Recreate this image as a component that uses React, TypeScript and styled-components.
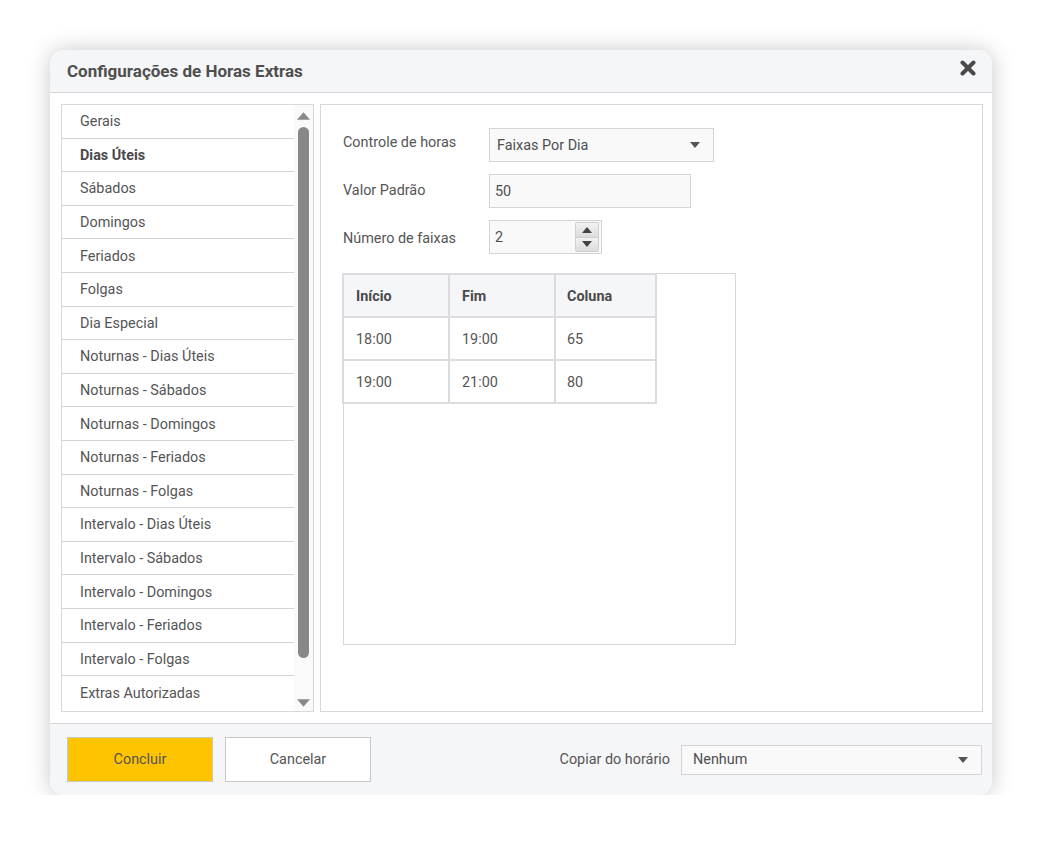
import React from 'react';
import styled, { createGlobalStyle } from 'styled-components';

const GlobalStyle = createGlobalStyle`
    body {
        margin: 0;
        background: #ffffff;
        font-family: Roboto, "Liberation Sans", sans-serif;
        color: #555;
    }
`

const sections = [
    'Gerais',
    'Dias Úteis',
    'Sábados',
    'Domingos',
    'Feriados',
    'Folgas',
    'Dia Especial',
    'Noturnas - Dias Úteis',
    'Noturnas - Sábados',
    'Noturnas - Domingos',
    'Noturnas - Feriados',
    'Noturnas - Folgas',
    'Intervalo - Dias Úteis',
    'Intervalo - Sábados',
    'Intervalo - Domingos',
    'Intervalo - Feriados',
    'Intervalo - Folgas',
    'Extras Autorizadas',
]

const faixas = [
    { inicio: '18:00', fim: '19:00', coluna: '65' },
    { inicio: '19:00', fim: '21:00', coluna: '80' },
]

const Caret = () => (
    <svg width="10" height="6" viewBox="0 0 10 6">
        <path d="M0 0h10L5 6z" fill="#555"/>
    </svg>
)

export default function App() {
    return (
        <>
            <GlobalStyle/>
            <Page>
                <Dialog>
                    <Header>
                        <Title>Configurações de Horas Extras</Title>
                        <Close aria-label="Fechar">
                            <svg width="16" height="16" viewBox="0 0 16 16">
                                <path d="M2.5 2.5l11 11M13.5 2.5l-11 11" stroke="#4a4a4a" strokeWidth="4" strokeLinecap="round"/>
                            </svg>
                        </Close>
                    </Header>
                    <Body>
                        <ListPanel>
                            <List>
                                {sections.map((s) => (
                                    <Item key={s} $active={s === 'Dias Úteis'}>{s}</Item>
                                ))}
                            </List>
                            <ScrollBar>
                                <ScrollArrow viewBox="0 0 14 8">
                                    <path d="M7 0l7 8H0z" fill="#888"/>
                                </ScrollArrow>
                                <Track>
                                    <Thumb/>
                                </Track>
                                <ScrollArrow viewBox="0 0 14 8">
                                    <path d="M0 0h14L7 8z" fill="#888"/>
                                </ScrollArrow>
                            </ScrollBar>
                        </ListPanel>
                        <ContentPanel>
                            <Form>
                                <Label $shift={-3}>Controle de horas</Label>
                                <Select $width={225}>
                                    <span>Faixas Por Dia</span>
                                    <Caret/>
                                </Select>
                                <Label $shift={-1}>Valor Padrão</Label>
                                <Input $width={202}>50</Input>
                                <Label $shift={1}>Número de faixas</Label>
                                <Input $width={113}>
                                    2
                                    <Spinner>
                                        <SpinButton>
                                            <svg width="10" height="6" viewBox="0 0 10 6"><path d="M5 0l5 6H0z" fill="#444"/></svg>
                                        </SpinButton>
                                        <SpinButton>
                                            <svg width="10" height="6" viewBox="0 0 10 6"><path d="M0 0h10L5 6z" fill="#444"/></svg>
                                        </SpinButton>
                                    </Spinner>
                                </Input>
                            </Form>
                            <TableBox>
                                <Table>
                                    <thead>
                                        <tr>
                                            <Th>Início</Th>
                                            <Th>Fim</Th>
                                            <Th>Coluna</Th>
                                        </tr>
                                    </thead>
                                    <tbody>
                                        {faixas.map((f) => (
                                            <tr key={f.inicio}>
                                                <Td>{f.inicio}</Td>
                                                <Td>{f.fim}</Td>
                                                <Td>{f.coluna}</Td>
                                            </tr>
                                        ))}
                                    </tbody>
                                </Table>
                            </TableBox>
                        </ContentPanel>
                    </Body>
                    <Footer>
                        <Button $primary>Concluir</Button>
                        <Button>Cancelar</Button>
                        <CopyLabel>Copiar do horário</CopyLabel>
                        <Select $width={301} $height={30} $padLeft={11}>
                            <span>Nenhum</span>
                            <Caret/>
                        </Select>
                    </Footer>
                </Dialog>
            </Page>
        </>
    )
}

const Page = styled.div`
    padding: 50px 0 0 50px;
`

const Dialog = styled.div`
    width: 942px;
    height: 745px;
    border-radius: 14px;
    background: #fff;
    box-shadow: 0 0 22px rgba(0, 0, 0, 0.22);
    display: flex;
    flex-direction: column;
    overflow: hidden;
`

const Header = styled.div`
    height: 42px;
    background: #f5f6f8;
    border-bottom: 1px solid #d3d3d8;
    display: flex;
    align-items: center;
    justify-content: space-between;
    padding: 0 16px 0 17px;
    flex-shrink: 0;
`

const Title = styled.h1`
    margin: 0;
    font-size: 17px;
    font-weight: 700;
    color: #4f4f4f;
`

const Close = styled.div`
    display: flex;
    margin-top: -7px;
`

const Body = styled.div`
    flex: 1;
    display: flex;
    gap: 6px;
    padding: 11px 9px 11px 11px;
    border-bottom: 1px solid #d8d8dc;
`

const ListPanel = styled.div`
    width: 251px;
    border: 1px solid #d8d8dc;
    display: flex;
`

const List = styled.div`
    flex: 1;
    display: flex;
    flex-direction: column;
`

const Item = styled.div<{ $active?: boolean }>`
    height: 33.6px;
    box-sizing: border-box;
    border-bottom: 1px solid #d3d3d8;
    padding: 1px 0 0 18px;
    display: flex;
    align-items: center;
    font-size: 14.4px;
    font-weight: ${(p) => (p.$active ? 700 : 400)};
    color: ${(p) => (p.$active ? '#4a4a4a' : '#555')};

    &:last-child {
        border-bottom: none;
    }
`

const ScrollBar = styled.div`
    width: 19px;
    background: #fafafa;
    display: flex;
    flex-direction: column;
    align-items: center;
    padding: 7px 0 4px;
    gap: 3px;
`

const ScrollArrow = styled.svg`
    width: 13px;
    height: 8px;
    flex-shrink: 0;
`

const Track = styled.div`
    flex: 1;
    width: 11px;
    padding: 4px 0 38px;
    display: flex;
`

const Thumb = styled.div`
    flex: 1;
    background: #888;
    border-radius: 6px;
`

const ContentPanel = styled.div`
    flex: 1;
    border: 1px solid #d8d8dc;
    padding: 23px 22px;
    display: flex;
    flex-direction: column;
    gap: 19px;
`

const Form = styled.div`
    display: grid;
    grid-template-columns: 146px auto;
    row-gap: 12px;
    align-items: center;
    justify-items: start;
`

const Label = styled.div<{ $shift: number }>`
    font-size: 14.4px;
    color: #555;
    position: relative;
    top: ${(p) => p.$shift}px;
`

const Select = styled.div<{ $width: number; $height?: number; $padLeft?: number }>`
    width: ${(p) => p.$width}px;
    height: ${(p) => p.$height ?? 34}px;
    box-sizing: border-box;
    border: 1px solid #d3d3d8;
    background: #f9f9f9;
    display: flex;
    align-items: center;
    justify-content: space-between;
    padding: 0 13px 0 ${(p) => p.$padLeft ?? 7}px;
    font-size: 14.4px;
    color: #4f4f4f;
`

const Input = styled.div<{ $width: number }>`
    width: ${(p) => p.$width}px;
    height: 34px;
    box-sizing: border-box;
    border: 1px solid #d3d3d8;
    background: #f9f9f9;
    display: flex;
    align-items: center;
    justify-content: space-between;
    padding: 0 2px 0 5px;
    font-size: 14.4px;
    color: #4f4f4f;
`

const Spinner = styled.div`
    width: 24px;
    height: 30px;
    display: flex;
    flex-direction: column;
    border-radius: 2px;
    overflow: hidden;
    border: 1px solid #cfcfcf;
    box-sizing: border-box;
`

const SpinButton = styled.div`
    flex: 1;
    display: flex;
    align-items: center;
    justify-content: center;
    background: linear-gradient(#f2f2f2, #dcdcdc);

    & + & {
        border-top: 1px solid #cfcfcf;
    }
`

const TableBox = styled.div`
    width: 393px;
    height: 372px;
    box-sizing: border-box;
    border: 1px solid #d8d8dc;
`

const Table = styled.table`
    border-collapse: collapse;
    font-size: 14.4px;
    margin: -1px 0 0 -2px;
`

const Th = styled.th`
    width: 106px;
    height: 43px;
    box-sizing: border-box;
    background: #f5f6f8;
    border: 2px solid #dcdce0;
    text-align: left;
    padding: 1px 0 0 12px;
    font-weight: 700;
    color: #4a4a4a;

    &:last-child {
        width: 101px;
        padding-left: 11px;
    }
`

const Td = styled.td`
    height: 43px;
    box-sizing: border-box;
    border: 2px solid #dcdce0;
    padding: 1px 0 0 12px;
    color: #555;

    &:last-child {
        padding-left: 11px;
    }
`

const Footer = styled.div`
    height: 71px;
    background: #f5f6f8;
    display: flex;
    align-items: center;
    padding: 0 10px 0 17px;
    flex-shrink: 0;
`

const Button = styled.div<{ $primary?: boolean }>`
    width: 146px;
    height: 45px;
    box-sizing: border-box;
    border: 1px solid #c8c8c8;
    background: ${(p) => (p.$primary ? '#ffc400' : '#fff')};
    display: flex;
    align-items: center;
    justify-content: center;
    font-size: 14.4px;
    color: #555;
    margin-right: 12px;
`

const CopyLabel = styled.div`
    margin-left: auto;
    margin-right: 11px;
    font-size: 14.4px;
    color: #555;
`
